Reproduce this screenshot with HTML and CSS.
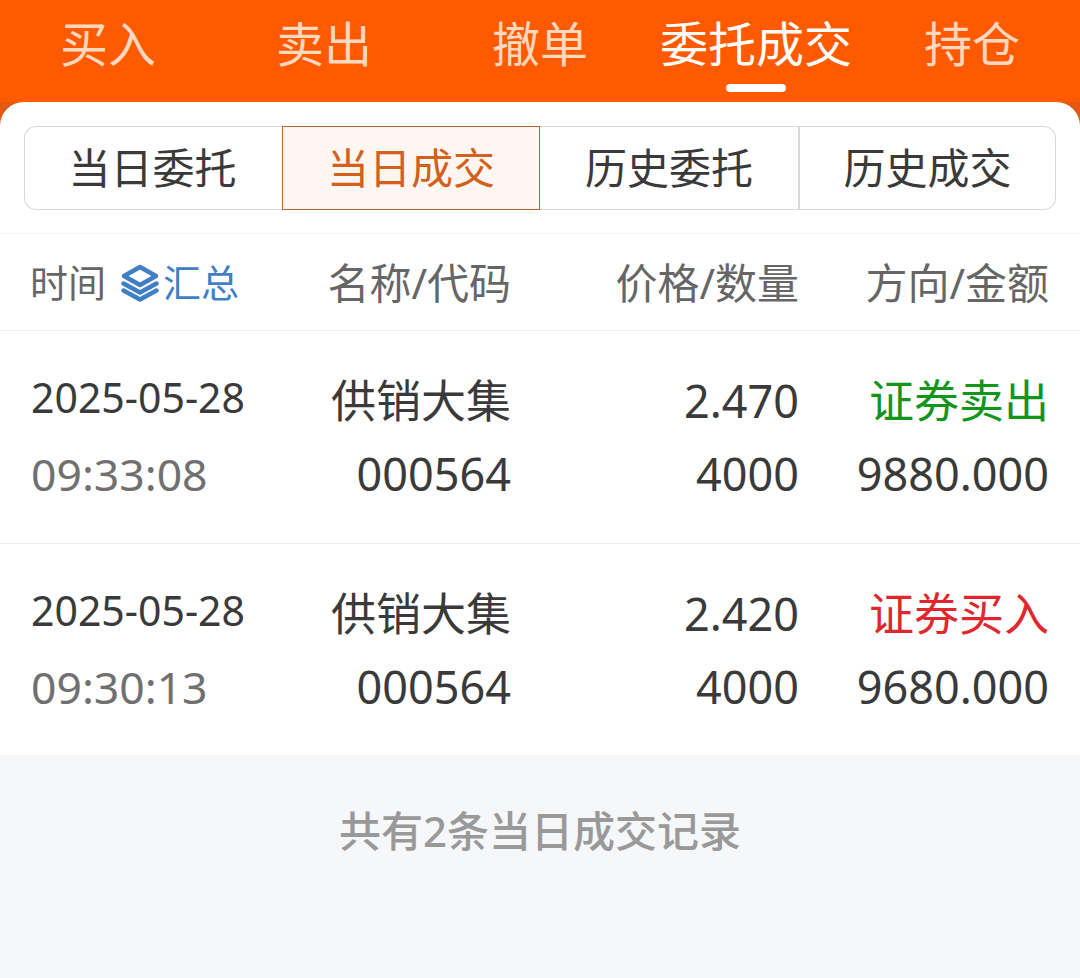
FILE: index.html
```html
<!DOCTYPE html>
<html lang="zh-CN">
<head>
<meta charset="utf-8">
<title>当日成交</title>
<link rel="stylesheet" href="styles.css">
</head>
<body>
<div class="page">
  <nav class="tabs">
    <div class="tab">买入</div>
    <div class="tab">卖出</div>
    <div class="tab">撤单</div>
    <div class="tab active">委托成交</div>
    <div class="tab">持仓</div>
  </nav>
  <main class="panel">
    <div class="segment-wrap">
      <div class="segment">
        <div class="seg">当日委托</div>
        <div class="seg on">当日成交</div>
        <div class="seg">历史委托</div>
        <div class="seg">历史成交</div>
      </div>
    </div>
    <div class="row head">
      <div class="time-head">时间
        <span class="summary">
          <svg class="layers" viewBox="0 0 38 38" width="38" height="38" aria-hidden="true">
            <path d="M19 3 L35 12 L19 21 L3 12 Z" fill="none" stroke="#3f7fc6" stroke-width="4.4" stroke-linejoin="round"/>
            <path d="M2.5 19.5 L19 28.5 L35.5 19.5" fill="none" stroke="#3f7fc6" stroke-width="4.4" stroke-linecap="round" stroke-linejoin="round"/>
            <path d="M2.5 26.5 L19 35.5 L35.5 26.5" fill="none" stroke="#3f7fc6" stroke-width="4.4" stroke-linecap="round" stroke-linejoin="round"/>
          </svg>汇总</span>
      </div>
      <div class="r">名称/代码</div>
      <div class="r">价格/数量</div>
      <div class="r">方向/金额</div>
    </div>
    <div class="row data">
      <div class="date">2025-05-28</div>
      <div class="r main">供销大集</div>
      <div class="r main">2.470</div>
      <div class="r main green">证券卖出</div>
      <div class="clock">09:33:08</div>
      <div class="r main">000564</div>
      <div class="r main">4000</div>
      <div class="r main">9880.000</div>
    </div>
    <div class="row data last">
      <div class="date">2025-05-28</div>
      <div class="r main">供销大集</div>
      <div class="r main">2.420</div>
      <div class="r main red">证券买入</div>
      <div class="clock">09:30:13</div>
      <div class="r main">000564</div>
      <div class="r main">4000</div>
      <div class="r main">9680.000</div>
    </div>
    <footer class="foot">共有2条当日成交记录</footer>
  </main>
</div>
</body>
</html>
```
FILE: styles.css
```css
* { box-sizing: border-box; }
html, body { margin: 0; padding: 0; }
body {
  width: 1080px;
  height: 978px;
  overflow: hidden;
  font-family: "Noto Sans", "Noto Sans CJK SC", sans-serif;
  background: #f6f7f9;
  color: #3a3a3a;
}
.page { display: flex; flex-direction: column; height: 978px; background: #e25a12; }
.tabs { display: flex; height: 102px; background: #ff5a00; }
.tab {
  flex: 1;
  position: relative;
  text-align: center;
  font-size: 48px;
  line-height: 88px;
  color: #ffd8bf;
}
.tab.active { color: #fff; }
.tab.active::after {
  content: "";
  position: absolute;
  left: 78px;
  top: 84px;
  width: 60px;
  height: 8px;
  border-radius: 4px;
  background: #fff;
}
.panel {
  flex: 1;
  display: flex;
  flex-direction: column;
  background: #fff;
  border-radius: 24px 24px 0 0;
}
.segment-wrap { padding: 24px 24px 23px; border-bottom: 1px solid #f2f2f2; }
.segment {
  display: grid;
  grid-template-columns: repeat(4, 258px);
  height: 84px;
}
.seg {
  display: flex;
  align-items: center;
  justify-content: center;
  padding-bottom: 5px;
  font-size: 42px;
  color: #3a3a3a;
  border: 1px solid #d8d8d8;
  border-width: 1px 0;
}
.seg:first-child { border-left-width: 1px; border-radius: 12px 0 0 12px; padding-right: 2px; }
.seg:last-child { border-left-width: 2px; border-right-width: 1px; border-radius: 0 12px 12px 0; }
.seg.on {
  border: 1px solid #b5673a;
  background: #fff6f1;
  color: #d2601e;
}
.row {
  display: grid;
  grid-template-columns: 240px 240px 288px 250px;
  padding: 0 31px;
}
.r { text-align: right; }
.head {
  height: 97px;
  padding-bottom: 3px;
  align-items: center;
  font-size: 42px;
  color: #666;
  border-bottom: 1px solid #eeeeee;
}
.time-head { display: flex; align-items: center; font-size: 38px; color: #666; white-space: nowrap; margin-left: -1px; }
.summary { display: inline-flex; align-items: center; color: #3f7fc6; margin-left: 15px; }
.layers { margin: 5px 4px 0 0; }
.data {
  height: 213px;
  align-content: start;
  padding-top: 33px;
  grid-auto-rows: 73px;
  align-items: center;
  border-bottom: 1px solid #eeeeee;
  line-height: 73px;
}
.data.last { height: 211px; border-bottom: 0; }
.main { font-size: 45px; color: #3a3a3a; white-space: nowrap; }
.date { font-size: 41px; line-height: 67px; align-self: start; color: #3a3a3a; white-space: nowrap; }
.clock { font-size: 44.5px; color: #707070; white-space: nowrap; }
.green { color: #12951a; }
.red { color: #e0272d; }
.foot {
  flex: 1;
  background: #f6f7f9;
  text-align: center;
  padding-top: 48px;
  font-size: 42px;
  line-height: 56px;
  font-weight: 500;
  color: #999;
}
```
